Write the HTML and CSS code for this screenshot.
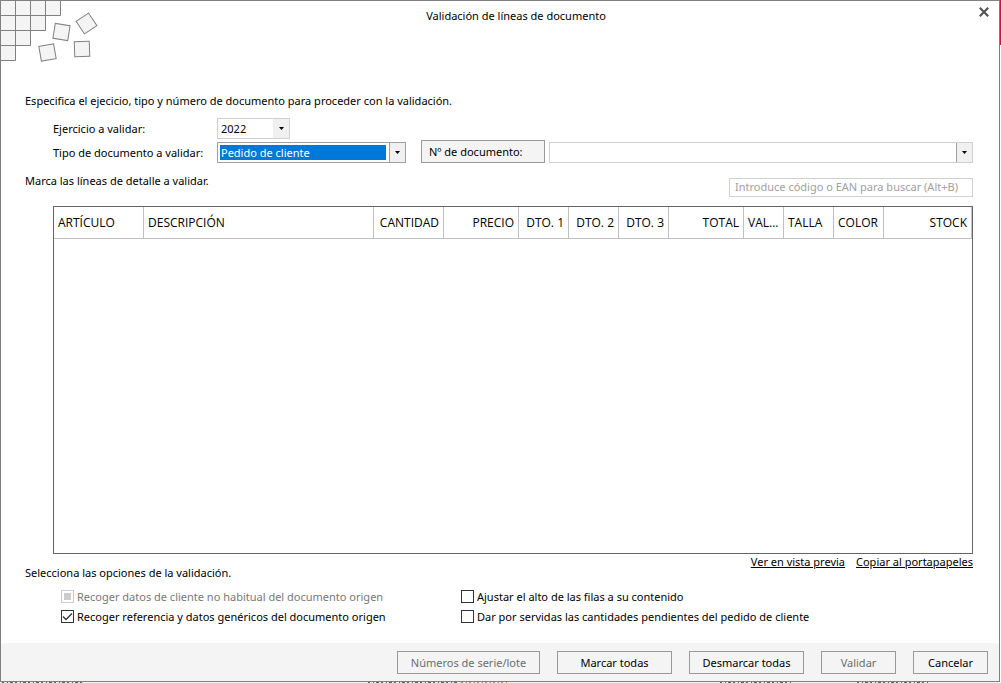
FILE: index.html
```html
<!DOCTYPE html>
<html lang="es">
<head>
<meta charset="utf-8">
<title>Validación de líneas de documento</title>
<link rel="stylesheet" href="styles.css">
</head>
<body>
<main class="dialog">
  <header class="titlebar">
    <svg class="tiles" width="100" height="64" viewBox="0 0 100 64" aria-hidden="true">
      <g fill="#f4f4f4" stroke="#808080">
        <path d="M.5.5h60v15h-60zM.5 15.5h45v15h-45zM.5 30.5h30v15h-30zM.5 45.5h15v15h-15zM15.5.5v45M30.5.5v30M45.5.5v15"/>
        <rect x="54" y="24.5" width="15" height="15" transform="rotate(9 61.5 32)"/>
        <rect x="79" y="16" width="15" height="15" transform="rotate(-34 86.5 23.500)"/>
        <rect x="40" y="45" width="15" height="15" transform="rotate(-10 47.500 52.500)"/>
        <rect x="74.500" y="41.500" width="15" height="15" transform="rotate(-2 82 49)"/>
      </g>
    </svg>
    <h1 class="title">Validación de líneas de documento</h1>
    <button class="close" type="button" aria-label="Cerrar">
      <svg width="10" height="10" viewBox="0 0 10 10"><path d="M.8.8l8.400 8.400M9.200.8l-8.400 8.400" stroke="#555" stroke-width="2.200"/></svg>
    </button>
  </header>

  <section class="content">
    <p class="text">Especifica el ejecicio, tipo y número de documento para proceder con la validación.</p>
    <div class="form">
      <label class="label" for="year">Ejercicio a validar:</label>
      <div class="combo combo-year">
        <select id="year" class="select"><option>2022</option></select>
        <svg class="arrow" viewBox="0 0 5 3"><path d="M0 0h5L2.500 3z"/></svg>
      </div>
      <label class="label" for="type">Tipo de documento a validar:</label>
      <div class="combo combo-active">
        <select id="type" class="select select-active"><option>Pedido de cliente</option></select>
        <svg class="arrow" viewBox="0 0 5 3"><path d="M0 0h5L2.500 3z"/></svg>
      </div>
      <button class="button button-number" type="button">Nº de documento:</button>
      <div class="combo combo-split">
        <select class="select" aria-label="Nº de documento"><option></option></select>
        <svg class="arrow" viewBox="0 0 5 3"><path d="M0 0h5L2.500 3z"/></svg>
      </div>
    </div>
    <div class="detail">
      <p class="text">Marca las líneas de detalle a validar.</p>
      <input class="search" type="text" aria-label="Buscar" placeholder="Introduce código o EAN para buscar (Alt+B)">
    </div>
    <div class="grid">
      <table class="lines">
        <colgroup>
          <col class="w90"><col><col class="w70"><col class="w75"><col class="w50"><col class="w50"><col class="w50"><col class="w75"><col class="w40"><col class="w50"><col class="w50"><col class="w88">
        </colgroup>
        <thead>
          <tr>
            <th>ARTÍCULO</th><th>DESCRIPCIÓN</th><th class="num">CANTIDAD</th><th class="num">PRECIO</th><th class="num">DTO. 1</th><th class="num">DTO. 2</th><th class="num">DTO. 3</th><th class="num">TOTAL</th><th>VAL...</th><th>TALLA</th><th>COLOR</th><th class="num">STOCK</th>
          </tr>
        </thead>
      </table>
    </div>
    <nav class="links">
      <a class="link" href="#">Ver en vista previa</a>
      <a class="link" href="#">Copiar al portapapeles</a>
    </nav>
    <p class="text">Selecciona las opciones de la validación.</p>
    <div class="options">
      <label class="option option-off"><input class="check" type="checkbox" disabled>Recoger datos de cliente no habitual del documento origen</label>
      <label class="option"><input class="check" type="checkbox">Ajustar el alto de las filas a su contenido</label>
      <label class="option"><input class="check" type="checkbox" checked>Recoger referencia y datos genéricos del documento origen</label>
      <label class="option"><input class="check" type="checkbox">Dar por servidas las cantidades pendientes del pedido de cliente</label>
    </div>
  </section>

  <footer class="footer">
    <button class="button button-serial" type="button" disabled>Números de serie/lote</button>
    <button class="button button-wide" type="button">Marcar todas</button>
    <button class="button button-wide" type="button">Desmarcar todas</button>
    <button class="button" type="button" disabled>Validar</button>
    <button class="button" type="button">Cancelar</button>
  </footer>
</main>
<div class="edge"></div>
<svg class="backdrop" width="1001" height="1" aria-hidden="true">
  <path d="M2 .5h82M368 .5h90M720 .5h72M857 .5h72" stroke="#6a6058" stroke-dasharray="2 3 1 2 3 2"/>
  <path d="M461 .5h46" stroke="#b98a4a" stroke-dasharray="2 3 1 2"/>
</svg>
</body>
</html>
```
FILE: styles.css
```css
* { box-sizing: border-box; }
body {
  margin: 0;
  min-height: 100vh;
  display: grid;
  grid-template-columns: 1fr 1px;
  grid-template-rows: 1fr 1px;
  background: #f4f4f4;
  color: #000;
  font: 11px/16px "Noto Sans", "Open Sans", sans-serif;
}
button, select, input { font: inherit; color: inherit; margin: 0; }
p, h1 { margin: 0; }
.dialog {
  display: flex;
  flex-direction: column;
  min-width: 0;
  background: #fff;
  border: 1px solid #808080;
}
.edge { background: linear-gradient(#d0103a 45px, #fff 45px); }
.backdrop { grid-column: 1 / -1; width: 100%; min-width: 0; }
.titlebar {
  position: relative;
  display: flex;
  justify-content: center;
  height: 92px;
  padding: 7px 0 0 32px;
}
.tiles { position: absolute; left: -1px; top: -1px; }
.title { font: inherit; }
.close {
  position: absolute;
  right: 10px;
  top: 6px;
  padding: 0;
  border: 0;
  background: none;
  line-height: 0;
}
.content {
  flex: 1;
  display: flex;
  flex-direction: column;
  padding: 0 26px 16px 24px;
}
.form {
  display: grid;
  grid-template-columns: 164px 189px 124px 1fr;
  grid-template-rows: 21px 23px;
  row-gap: 1px;
  padding: 9px 0 0 28px;
}
.label { align-self: end; padding-bottom: 2px; white-space: nowrap; }
.combo {
  position: relative;
  align-self: end;
  display: flex;
  height: 21px;
  border: 1px solid #d0d0d0;
  background: linear-gradient(#f0f0f0, #f0f0f0) right / 16px 100% no-repeat #fff;
}
.combo-year { width: 73px; grid-column: 2 / -1; }
.combo-active { border-color: #a0a0a0; }
.combo-active::after, .combo-split::after {
  content: "";
  position: absolute;
  right: 15px;
  top: 0;
  bottom: 0;
  border-left: 1px solid #a0a0a0;
}
.combo-split { margin-left: 4px; }
.select {
  appearance: none;
  flex: 1;
  border: 0;
  padding: 2px 19px 2px 3px;
  outline: 0;
  background: none;
  line-height: 15px;
}
.select-active {
  padding-left: 2px;
  text-indent: 1px;
  color: #fff;
  background: #0078d7 content-box;
}
.arrow {
  position: absolute;
  right: 5px;
  top: 8px;
  width: 5px;
  height: 3px;
  pointer-events: none;
}
.button {
  width: 75px;
  height: 23px;
  padding: 0;
  border: 1px solid #999;
  background: #f4f4f4;
  white-space: nowrap;
}
.button:disabled { color: #6d6d6d; }
.button-number { width: auto; margin-left: 15px; margin-right: -15px; padding-left: 7px; text-align: left; }
.button-number + .combo { margin-left: 19px; }
.button-serial { width: 143px; }
.button-wide { width: 115px; }
.detail { display: flex; justify-content: space-between; padding-top: 10px; }
.search {
  width: 244px;
  height: 19px;
  margin-top: 5px;
  padding: 0 5px 2px;
  border: 1px solid #d0d0d0;
  outline: 0;
  background: #fff;
}
.search::placeholder { color: #a0a0a0; opacity: 1; }
.grid { flex: 1; margin: 9px 0 0 28px; border: 1px solid #646464; }
.lines {
  width: 100%;
  table-layout: fixed;
  border-collapse: separate;
  border-spacing: 0;
}
.lines th {
  height: 32px;
  padding: 0 4px;
  border: solid #c0c0c0;
  border-width: 0 1px 1px 0;
  font: 12px/16px "Open Sans", sans-serif;
  text-align: left;
  white-space: nowrap;
}
.lines .num { text-align: right; }
.w40 { width: 40px; }
.w50 { width: 50px; }
.w70 { width: 70px; }
.w75 { width: 75px; }
.w88 { width: 88px; }
.w90 { width: 90px; }
.links { display: flex; justify-content: flex-end; gap: 11px; height: 11px; }
.link { color: #000; }
.options {
  display: grid;
  grid-template-columns: 400px 1fr;
  grid-auto-rows: 20px;
  padding: 6px 0 0 36px;
}
.option { display: flex; align-items: center; gap: 3px; white-space: nowrap; }
.option-off { color: #787878; }
.check {
  appearance: none;
  flex: none;
  width: 13px;
  height: 13px;
  margin-bottom: 1px;
  border: 1px solid #333;
  background: #fff;
}
.check:disabled {
  border-color: #ccc;
  background: #ccc content-box;
  padding: 2px;
}
.check:checked {
  background: url("data:image/svg+xml,%3Csvg xmlns='http://www.w3.org/2000/svg' viewBox='0 0 11 11'%3E%3Cpath d='M1 5.500l3 3L10 2.500' fill='none' stroke='%23333' stroke-width='1.300'/%3E%3C/svg%3E") center / 11px 11px no-repeat #fff;
}
.footer {
  display: flex;
  justify-content: flex-end;
  gap: 17px;
  padding: 8px 11px 7px;
  background: #f4f4f4;
}
```
